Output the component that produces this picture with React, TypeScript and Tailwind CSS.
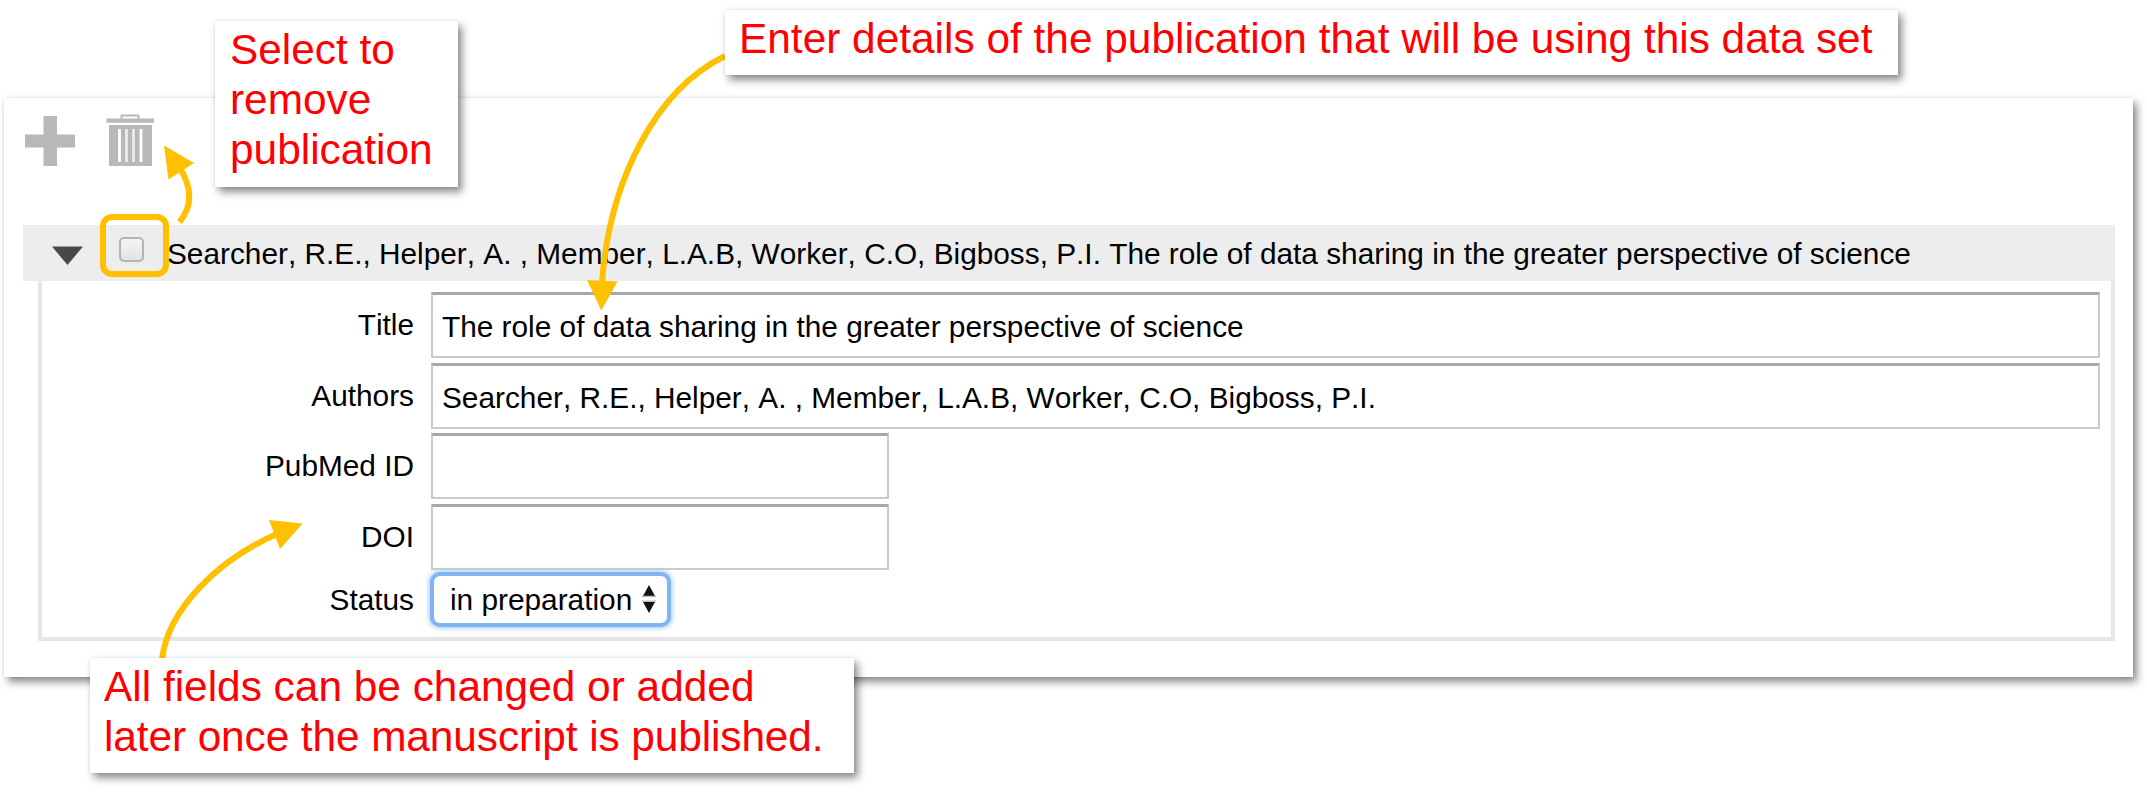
import React from "react";

const AUTHORS = "Searcher, R.E., Helper, A. , Member, L.A.B, Worker, C.O, Bigboss, P.I.";
const TITLE = "The role of data sharing in the greater perspective of science";

function Row({ label, value, wide }: { label: string; value?: string; wide?: boolean }) {
  return (
    <div className="flex h-[70.6px] items-start">
      <div className="w-[372px] pt-[16px] text-right leading-[34px]">{label}</div>
      <div
        className={
          "ml-[17px] h-[66px] border-2 border-t-[3px] border-[#cbcbcb] border-t-[#a8a8a8] pl-[9px] pt-[15px] leading-[34px] " +
          (wide ? "w-[1669px]" : "w-[458px]")
        }
      >
        {value}
      </div>
    </div>
  );
}

function Callout({ className, children }: { className: string; children: React.ReactNode }) {
  return (
    <div
      className={
        "absolute bg-white pt-[4px] text-[42.4px] leading-[50px] whitespace-nowrap text-[#ff0000] shadow-[4px_5px_8px_rgba(0,0,0,0.45),0_0_3px_rgba(0,0,0,0.1)] " +
        className
      }
    >
      {children}
    </div>
  );
}

export default function App() {
  return (
    <div className="relative h-[804px] w-[2147px] overflow-hidden bg-white pt-[98px] pl-[4px] font-['Liberation_Sans',Arial,sans-serif] text-[29.8px] text-black [font-kerning:none]">
      <div className="flex h-[579px] w-[2129px] flex-col bg-white pl-[19px] shadow-[4px_5px_8px_rgba(0,0,0,0.45),0_0_3px_rgba(0,0,0,0.1)]">
        <div className="flex h-[127px] pt-[18px]">
          <svg className="ml-[2px] h-[50px] w-[50px]" viewBox="0 0 50 50">
            <path d="M18.5 0H32V18.5H50V31.5H32V50H18.5V31.5H0V18.5H18.5Z" fill="#b8b8b8" />
          </svg>
          <svg className="-mt-[2px] ml-[31px] h-[52px] w-[48px]" viewBox="0 0 48 52">
            <path d="M15.5 5V1.5H32.5V5" fill="none" stroke="#b8b8b8" strokeWidth="2" />
            <path d="M0.5 4.5H48V8.7H0.5Z" fill="#b8b8b8" />
            <path d="M3 11H46V52H3Z" fill="#b8b8b8" />
            <path d="M13.5 15V48M35 15V48" stroke="#fff" strokeWidth="2.8" />
            <path d="M20.5 15V48M27.5 15V48" stroke="#ececec" strokeWidth="2.8" />
          </svg>
        </div>
        <div className="flex h-[56px] w-[2092px] items-center bg-[#ededed]">
          <svg className="mt-[4px] ml-[29px] h-[19px] w-[31px]" viewBox="0 0 31 19">
            <path d="M0 0.5H31L15.5 19Z" fill="#48484b" />
          </svg>
          <div className="-mt-[7px] ml-[36px] h-[25px] w-[25px] rounded-[5px] border-2 border-[#b4b4b4] bg-linear-to-b from-[#f2f2f2] to-[#e2e5e4]" />
          <div className="mt-[2px] ml-[23px] whitespace-nowrap leading-[34px]">{AUTHORS + " " + TITLE}</div>
        </div>
        <div className="ml-[15px] h-[360px] w-[2077px] border-4 border-t-0 border-[#e6e6e6] pt-[11px]">
          <Row label="Title" value={TITLE} wide />
          <Row label="Authors" value={AUTHORS} wide />
          <Row label="PubMed ID" />
          <Row label="DOI" />
          <div className="flex">
            <div className="w-[372px] pt-[9px] text-right leading-[34px]">Status</div>
            <div className="ml-[20px] mt-[2px] flex h-[47px] w-[233px] items-center rounded-[6px] bg-white pl-[16px] shadow-[0_0_0_4px_#7fb5f0,0_0_5px_5px_#9cc8f8]">
              <span className="leading-[34px]">in preparation</span>
              <svg className="-mt-[2px] ml-[10px] h-[28px] w-[14px]" viewBox="0 0 14 28">
                <path d="M7 0L13 11H1ZM1 17H13L7 28Z" fill="#111" />
                <path d="M0 11.5H14M0 16.3H14" stroke="#bdbdbd" strokeWidth="1.5" />
              </svg>
            </div>
          </div>
        </div>
      </div>

      <svg className="absolute inset-0 h-[804px] w-[2147px]" viewBox="0 0 2147 804" fill="none" stroke="#ffc000" strokeWidth="6">
        <rect x="103" y="217" width="63" height="57" rx="9" />
        <path d="M179.5 222C192 207 193 190 180.5 169" />
        <path d="M164 145.5L194 163L168.5 179.5Z" fill="#ffc000" stroke="none" />
        <path d="M725 56C655 90 609 182 602 283" />
        <path d="M587 280L617.5 281.5L601.3 310.5Z" fill="#ffc000" stroke="none" />
        <path d="M162 659C168 610 217 560 277 534" />
        <path d="M269 520L302.6 523.5L280 549Z" fill="#ffc000" stroke="none" />
      </svg>

      <Callout className="top-[21px] left-[215px] h-[166px] w-[243px] pl-[15px]">
        Select to
        <br />
        remove
        <br />
        publication
      </Callout>
      <Callout className="top-[10px] left-[725px] h-[65px] w-[1173px] pl-[14px]">
        Enter details of the publication that will be using this data set
      </Callout>
      <Callout className="top-[658px] left-[90px] h-[115px] w-[764px] pl-[14px]">
        All fields can be changed or added
        <br />
        <span className="tracking-[-0.1px]">later once the manuscript is published.</span>
      </Callout>
    </div>
  );
}
